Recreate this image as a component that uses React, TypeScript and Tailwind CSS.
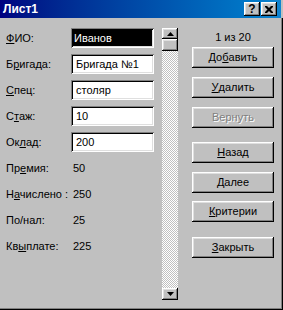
import React from "react";

const U = ({ children }: { children: React.ReactNode }) => (
  <span className="underline underline-offset-[1px] decoration-1">{children}</span>
);

const raised =
  "shadow-[inset_-1px_-1px_#000000,inset_1px_1px_#ffffff,inset_-2px_-2px_#808080,inset_2px_2px_#dfdfdf]";
const sunken =
  "shadow-[inset_1px_1px_#808080,inset_-1px_-1px_#ffffff,inset_2px_2px_#000000,inset_-2px_-2px_#dfdfdf]";

const fields: { label: React.ReactNode; value: string; selected?: boolean }[] = [
  { label: <><U>Ф</U>ИО:</>, value: "Иванов", selected: true },
  { label: <>Б<U>р</U>игада:</>, value: "Бригада №1" },
  { label: <><U>С</U>пец:</>, value: "столяр" },
  { label: <>С<U>т</U>аж:</>, value: "10" },
  { label: <>Ок<U>л</U>ад:</>, value: "200" },
];

const statics: { label: React.ReactNode; value: string }[] = [
  { label: <>Пр<U>е</U>мия:</>, value: "50" },
  { label: <>Н<U>а</U>числено :</>, value: "250" },
  { label: <>По/нал:</>, value: "25" },
  { label: <>Кв<U>ы</U>плате:</>, value: "225" },
];

const buttons: { label: React.ReactNode; mt: string; disabled?: boolean }[] = [
  { label: <>До<U>б</U>авить</>, mt: "mt-0" },
  { label: <><U>У</U>далить</>, mt: "mt-[9px]" },
  { label: <>Вернуть</>, mt: "mt-[9px]", disabled: true },
  { label: <><U>Н</U>азад</>, mt: "mt-[14px]" },
  { label: <><U>Д</U>алее</>, mt: "mt-[9px]" },
  { label: <><U>К</U>ритерии</>, mt: "mt-[8px]" },
  { label: <><U>З</U>акрыть</>, mt: "mt-[15px]" },
];

export default function App() {
  return (
    <div
      className="w-[283px] h-[310px] flex flex-col bg-[#c0c0c0] text-[11px] text-black overflow-hidden"
      style={{ fontFamily: '"Liberation Sans", Arial, sans-serif' }}
    >
      {/* Title bar */}
      <div className="h-[18px] mr-[2px] flex items-center bg-gradient-to-r from-[#000080] to-[#1084d0] pl-[3px] pr-[4px]">
        <span className="text-white font-bold text-[12px] leading-none">Лист1</span>
        <div className="ml-auto flex gap-[1px]">
          <div className={`w-[16px] h-[14px] bg-[#c0c0c0] ${raised} flex items-center justify-center`}>
            <span className="font-bold text-[12px] leading-none text-black">?</span>
          </div>
          <div className={`w-[16px] h-[14px] bg-[#c0c0c0] ${raised} flex items-center justify-center`}>
            <svg width="8" height="7" viewBox="0 0 8 7">
              <path d="M0 0h2l2 2 2-2h2v1L5.5 3.5 8 6v1H6L4 5 2 7H0V6l2.5-2.5L0 1z" fill="#000" />
            </svg>
          </div>
        </div>
      </div>

      {/* Body */}
      <div className="flex-1 flex border-r border-b border-black">
        <div className="flex-1 flex border-r border-b border-[#808080] pt-[10px]">
          {/* Left column */}
          <div className="w-[162px] pl-[6px] flex flex-col gap-[6px]">
            {fields.map((f, i) => (
              <div key={i} className="h-[20px] flex items-center">
                <div className="w-[65px]">{f.label}</div>
                <div className={`w-[83px] h-[20px] bg-white ${sunken} flex items-stretch p-[2px]`}>
                  {f.selected ? (
                    <div className="flex-1 bg-black text-white flex items-center pl-[1px]">{f.value}</div>
                  ) : (
                    <div className="flex-1 flex items-center pl-[3px]">{f.value}</div>
                  )}
                </div>
              </div>
            ))}
            {statics.map((s, i) => (
              <div key={i} className="h-[20px] flex items-center">
                <div className="w-[65px]">{s.label}</div>
                <div className="pl-[2px]">{s.value}</div>
              </div>
            ))}
          </div>

          {/* Scrollbar */}
          <div className="w-[16px] h-[272px] flex flex-col bg-[repeating-conic-gradient(#ffffff_0_25%,#c0c0c0_0_50%)] bg-[length:2px_2px]">
            <div className={`h-[11px] bg-[#c0c0c0] ${raised} flex items-center justify-center`}>
              <svg width="7" height="4" viewBox="0 0 7 4">
                <path d="M3.5 0L7 4H0z" fill="#000" />
              </svg>
            </div>
            <div className={`h-[12px] bg-[#c0c0c0] ${raised}`} />
            <div className="flex-1" />
            <div className={`h-[12px] bg-[#c0c0c0] ${raised} flex items-center justify-center`}>
              <svg width="7" height="4" viewBox="0 0 7 4">
                <path d="M0 0h7L3.5 4z" fill="#000" />
              </svg>
            </div>
          </div>

          {/* Right column */}
          <div className="ml-[14px] w-[82px] flex flex-col">
            <div className="h-[19px] flex items-center justify-center">1 из 20</div>
            {buttons.map((b, i) => (
              <div
                key={i}
                className={`${b.mt} h-[21px] bg-[#c0c0c0] ${raised} flex items-center justify-center ${
                  b.disabled ? "text-[#808080] [text-shadow:1px_1px_#ffffff]" : ""
                }`}
              >
                {b.label}
              </div>
            ))}
          </div>
        </div>
      </div>
    </div>
  );
}
